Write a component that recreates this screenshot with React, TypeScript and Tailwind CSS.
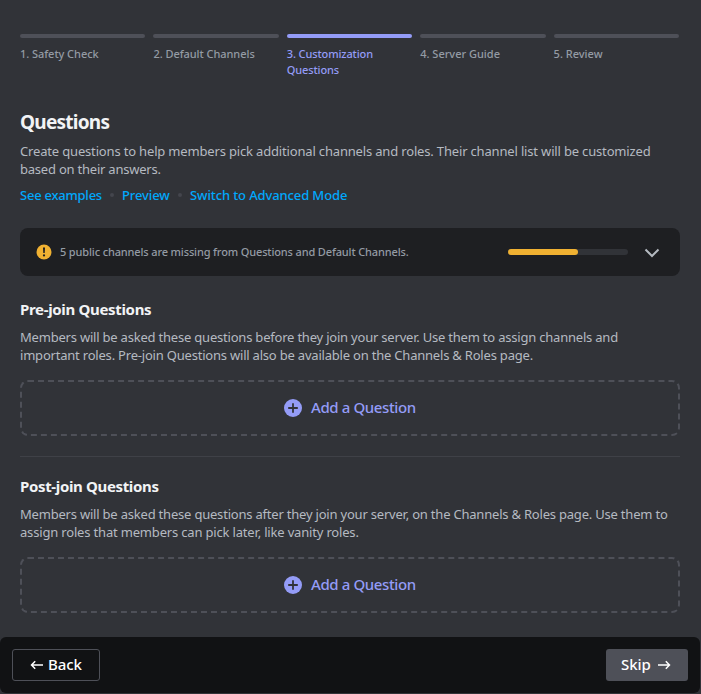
import React from "react";

const steps = [
  { label: "1. Safety Check", tracking: "tracking-[-0.05px]" },
  { label: "2. Default Channels", tracking: "tracking-[-0.05px]" },
  { label: "3. Customization Questions", tracking: "tracking-[-0.12px]", active: true },
  { label: "4. Server Guide", tracking: "tracking-[0px]" },
  { label: "5. Review", tracking: "tracking-[0px]" },
];

function Line({ children, className = "" }: { children: React.ReactNode; className?: string }) {
  return <span className={`block whitespace-nowrap ${className}`}>{children}</span>;
}

function AddQuestion() {
  return (
    <button className="flex h-14 w-full items-center justify-center rounded-lg border-2 border-dashed border-[#4e5058] text-[#949cf7]">
      <svg width="18" height="18" viewBox="0 0 18 18" className="mr-[9px]">
        <circle cx="9" cy="9" r="9" fill="#949cf7" />
        <path d="M9 4.200v9.600M4.200 9h9.600" stroke="#313338" strokeWidth="1.800" />
      </svg>
      <span className="mb-0.5 w-[105px] text-left text-[15px] leading-5 font-medium tracking-[-0.39px] whitespace-nowrap">Add a Question</span>
    </button>
  );
}

export default function App() {
  return (
    <div className="flex h-[694px] w-[701px] flex-col overflow-hidden bg-[#313338] font-['Noto_Sans',sans-serif]">
      <main className="flex h-[637px] flex-col pt-[34px] pr-[21px] pl-5">
        <nav className="grid h-11 w-[659px] grid-cols-5 gap-2">
          {steps.map((s) => (
            <div key={s.label}>
              <div className={`h-1 rounded-full ${s.active ? "bg-[#949cf7]" : "bg-[#4e5058]"}`} />
              <div className={`mt-2 text-[11px] leading-4 font-medium ${s.tracking} ${s.active ? "text-[#949cf7]" : "text-[#949ba4]"}`}>
                {s.label}
              </div>
            </div>
          ))}
        </nav>

        <h1 className="mt-8 text-[19px] leading-6 font-bold tracking-[-0.75px] text-[#f2f3f5]">Questions</h1>
        <p className="mt-2 text-[13px] leading-[18px] text-[#b5bac1]">
          <Line className="tracking-[-0.167px]">Create questions to help members pick additional channels and roles. Their channel list will be customized</Line>
          <Line className="tracking-[-0.22px]">based on their answers.</Line>
        </p>
        <div className="mt-2 flex items-center text-[13px] leading-[18px] font-medium whitespace-nowrap text-[#00a8fc]">
          <a className="w-[82px] tracking-[-0.24px]">See examples</a>
          <i className="mx-2 size-1 rounded-full bg-[#44464d]" />
          <a className="w-[48px] tracking-[-0.1px]">Preview</a>
          <i className="mx-2 size-1 rounded-full bg-[#44464d]" />
          <a className="tracking-[-0.12px]">Switch to Advanced Mode</a>
        </div>

        <section className="mt-6 flex h-12 items-center rounded-lg bg-[#1e1f22] pr-4 pl-4">
          <svg width="16" height="16" viewBox="0 0 16 16">
            <circle cx="8" cy="8" r="7.5" fill="#f0b132" />
            <path d="M7 3.5h2L8.7 9H7.3z" fill="#1e1f22" />
            <circle cx="8" cy="11.4" r="1.1" fill="#1e1f22" />
          </svg>
          <span className="ml-2 text-[11px] leading-4 font-medium tracking-[-0.14px] whitespace-nowrap text-[#949ba4]">
            5 public channels are missing from Questions and Default Channels.
          </span>
          <div className="ml-auto h-1.5 w-[120px] rounded-full bg-[#313338]">
            <div className="h-1.5 w-[70px] rounded-full bg-[#f0b132]" />
          </div>
          <svg width="24" height="24" viewBox="0 0 24 24" className="ml-3" fill="none" stroke="#b5bac1" strokeWidth="2">
            <path d="M5.5 9.5L12 16l6.500-6.500" />
          </svg>
        </section>

        <h2 className="mt-[23px] mb-px text-[15px] leading-5 font-bold tracking-[-0.33px] text-[#f2f3f5]">Pre-join Questions</h2>
        <p className="mt-2 text-[13px] leading-[18px] text-[#b5bac1]">
          <Line className="tracking-[-0.208px]">Members will be asked these questions before they join your server. Use them to assign channels and</Line>
          <Line className="tracking-[-0.205px]">important roles. Pre-join Questions will also be available on the Channels &amp; Roles page.</Line>
        </p>
        <div className="mt-4"><AddQuestion /></div>

        <hr className="mt-5 mb-[19px] border-[#3f4147]" />

        <h2 className="mb-px text-[15px] leading-5 font-bold tracking-[-0.35px] text-[#f2f3f5]">Post-join Questions</h2>
        <p className="mt-2 text-[13px] leading-[18px] text-[#b5bac1]">
          <Line className="tracking-[-0.205px]">Members will be asked these questions after they join your server, on the Channels &amp; Roles page. Use them to</Line>
          <Line className="tracking-[-0.175px]">assign roles that members can pick later, like vanity roles.</Line>
        </p>
        <div className="mt-4"><AddQuestion /></div>
      </main>

      <footer className="flex h-14 w-[700px] items-center justify-between rounded-md bg-[#111214] px-3 text-[15px] leading-5 font-medium text-white">
        <button className="flex h-8 w-[88px] items-center rounded-[3px] border border-[#4e5058] pl-[17px]">
          <svg width="14" height="12" viewBox="0 0 14 12" fill="none" stroke="currentColor" strokeWidth="1.5" className="mr-1">
            <path d="M13 6H1.700M5.200 2.200L1.500 6l3.700 3.800" />
          </svg>
          <span className="mb-0.5 tracking-[-0.1px]">Back</span>
        </button>
        <button className="flex h-8 w-[82px] items-center justify-between rounded-[3px] bg-[#4e5058] pr-[17px] pl-[15px]">
          <span className="mb-0.5 tracking-[-0.1px]">Skip</span>
          <svg width="14" height="12" viewBox="0 0 14 12" fill="none" stroke="currentColor" strokeWidth="1.5">
            <path d="M1 6h11.300M8.800 2.200L12.500 6l-3.700 3.800" />
          </svg>
        </button>
      </footer>
    </div>
  );
}
